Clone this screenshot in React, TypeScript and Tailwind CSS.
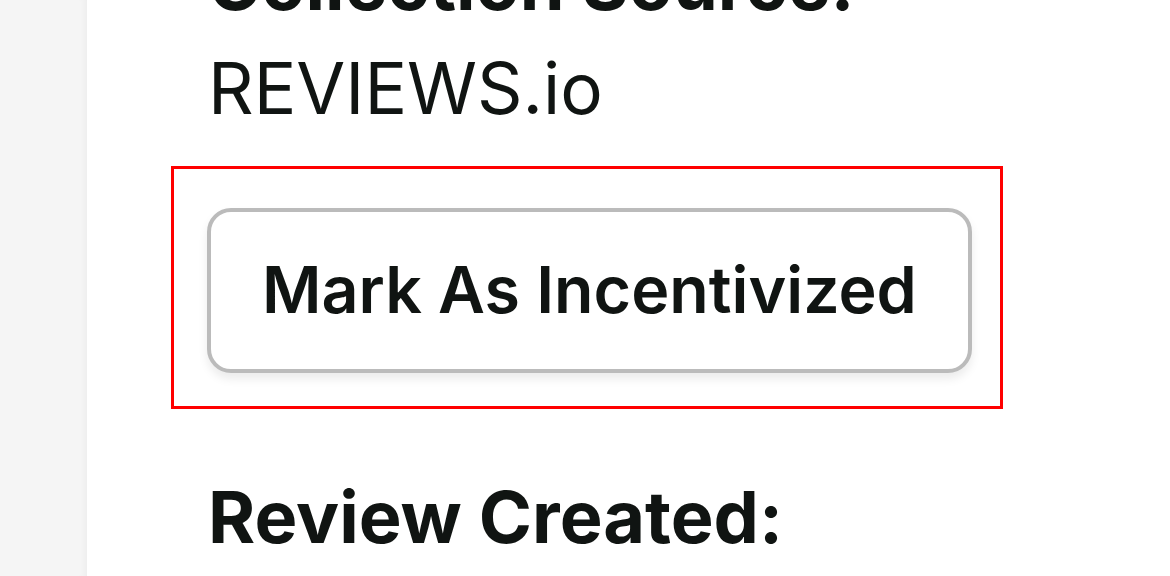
export default function App() {
  return (
    <div className="flex h-[576px] w-[1170px] overflow-hidden bg-white font-['Inter',sans-serif] text-[#101412]">
      <div className="w-[87px] shrink-0 bg-[#f5f5f5] shadow-[inset_-6px_0_6px_-4px_rgba(0,0,0,0.04)]" />
      <div className="flex-1 pl-[121px]">
        <h3 className="-mt-[60px] whitespace-nowrap text-[72px] font-bold leading-[87px]">Collection Source:</h3>
        <p className="mt-[18px] whitespace-nowrap text-[71px] leading-[87px]">REVIEWS.io</p>
        <div className="mt-[34px] -ml-[37px] w-[832px] border-[3px] border-[#ff0000] pt-[39px] pb-[33px] pl-[33px]">
          <button className="whitespace-nowrap rounded-[24px] border-4 border-[#bbbbbb] bg-white px-[51px] py-[38px] text-[64.5px] font-semibold leading-[81px] shadow-[0_6px_10px_rgba(0,0,0,0.08)]">
            Mark As Incentivized
          </button>
        </div>
        <h3 className="mt-[64px] whitespace-nowrap text-[72px] font-bold leading-[87px]">Review Created:</h3>
      </div>
    </div>
  );
}
